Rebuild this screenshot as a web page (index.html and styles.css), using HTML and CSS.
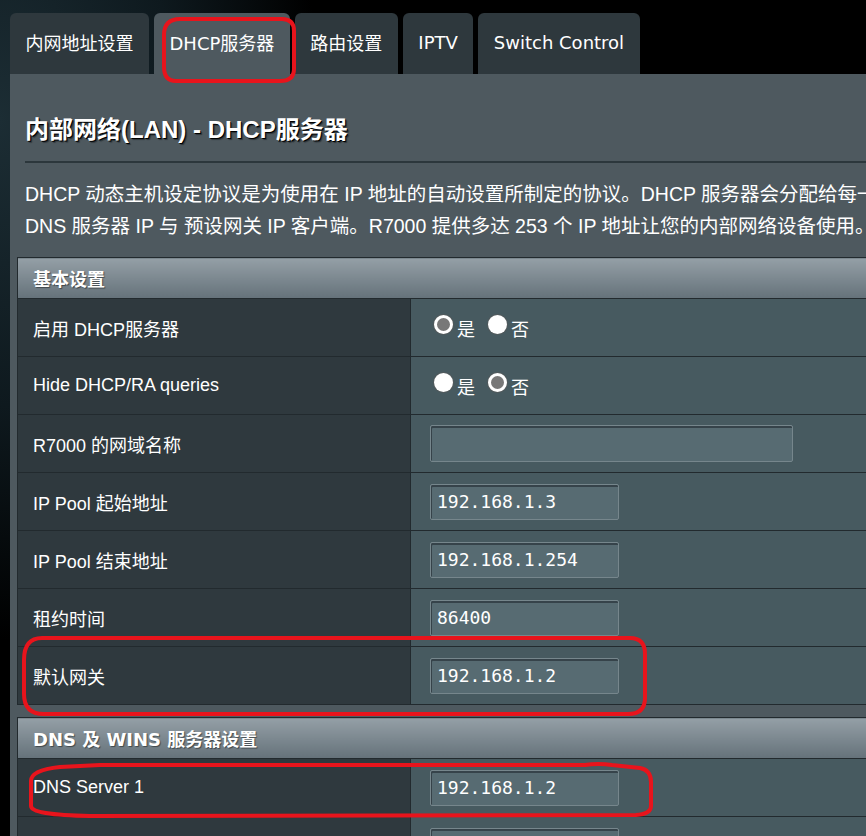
FILE: index.html
```html
<!DOCTYPE html>
<html lang="zh-CN">
<head>
<meta charset="utf-8">
<title>内部网络(LAN) - DHCP服务器</title>
<link rel="stylesheet" href="styles.css">
</head>
<body>
<div class="page">
  <nav class="tabs">
    <div class="tab">内网地址设置</div>
    <div class="tab active">DHCP服务器</div>
    <div class="tab">路由设置</div>
    <div class="tab">IPTV</div>
    <div class="tab">Switch Control</div>
  </nav>
  <main class="panel">
    <h1 class="title">内部网络(LAN) - DHCP服务器</h1>
    <div class="divider"></div>
    <p class="desc"><span>DHCP 动态主机设定协议是为使用在 IP 地址的自动设置所制定的协议。DHCP 服务器会分配给每一</span><br><span>DNS 服务器 IP 与 预设网关 IP 客户端。R7000 提供多达 253 个 IP 地址让您的内部网络设备使用。</span></p>

    <table class="form-table">
      <colgroup><col class="col-label"><col></colgroup>
      <thead><tr><th colspan="2">基本设置</th></tr></thead>
      <tbody>
        <tr>
          <td class="label">启用 DHCP服务器</td>
          <td class="value">
            <div class="radio-group">
              <input class="radio" type="radio" name="dhcp" checked><span class="radio-text">是</span>
              <input class="radio" type="radio" name="dhcp"><span class="radio-text">否</span>
            </div>
          </td>
        </tr>
        <tr>
          <td class="label">Hide DHCP/RA queries</td>
          <td class="value">
            <div class="radio-group">
              <input class="radio" type="radio" name="hide"><span class="radio-text">是</span>
              <input class="radio" type="radio" name="hide" checked><span class="radio-text">否</span>
            </div>
          </td>
        </tr>
        <tr>
          <td class="label">R7000 的网域名称</td>
          <td class="value"><input class="text-input wide" type="text" value=""></td>
        </tr>
        <tr>
          <td class="label">IP Pool 起始地址</td>
          <td class="value"><input class="text-input" type="text" value="192.168.1.3"></td>
        </tr>
        <tr>
          <td class="label">IP Pool 结束地址</td>
          <td class="value"><input class="text-input" type="text" value="192.168.1.254"></td>
        </tr>
        <tr>
          <td class="label">租约时间</td>
          <td class="value"><input class="text-input" type="text" value="86400"></td>
        </tr>
        <tr>
          <td class="label">默认网关</td>
          <td class="value"><input class="text-input" type="text" value="192.168.1.2"></td>
        </tr>
      </tbody>
    </table>

    <table class="form-table second">
      <colgroup><col class="col-label"><col></colgroup>
      <thead><tr><th colspan="2">DNS 及 WINS 服务器设置</th></tr></thead>
      <tbody>
        <tr>
          <td class="label">DNS Server 1</td>
          <td class="value"><input class="text-input" type="text" value="192.168.1.2"></td>
        </tr>
        <tr>
          <td class="label"></td>
          <td class="value"><input class="text-input" type="text" value=""></td>
        </tr>
      </tbody>
    </table>
  </main>

  <svg class="annotations" width="866" height="836" viewBox="0 0 866 836" aria-hidden="true">
    <path d="M180 19 L282 19 Q294 19 294 31 L294 69 Q294 81 280 81 L176 81 Q164 81 164 67 L164 35 Q164 19 180 19 Z"/>
    <path d="M42 638 L630 638 Q645 638 645 654 L645 698 Q645 714 628 714 L44 714 Q24 714 24 694 L24 660 Q24 638 42 638 Z"/>
    <path d="M100 765 L585 765 Q598 763 612 765 L640 768 Q651 770 651 782 L651 806 Q651 814 636 815 L90 816 Q31 815 31 806 L31 781 Q31 770 60 767 Z"/>
  </svg>
</div>
</body>
</html>
```
FILE: styles.css
```css
html, body {
  margin: 0;
  height: 100%;
  overflow: hidden;
}

body {
  background:
    radial-gradient(ellipse 320px 520px at 0 120px, #1c2d34 0%, #0e191e 55%, #000 100%),
    #000;
  color: #fff;
  font-family: "Liberation Sans", "Noto Sans CJK SC", sans-serif;
}

.page {
  position: relative;
  width: 1000px;
  min-height: 836px;
}

/* Tabs */
.tabs {
  display: flex;
  gap: 5px;
  padding: 13px 0 0 10px;
}

.tab {
  box-sizing: border-box;
  height: 61px;
  padding: 0 15.5px 3px;
  display: flex;
  align-items: center;
  background: #2e383d;
  border-radius: 6px 6px 0 0;
  font-family: "DejaVu Sans", "Noto Sans CJK SC", sans-serif;
  font-size: 18px;
  color: #fff;
  white-space: nowrap;
}

.tab.active {
  background: #4e595f;
}

/* Main panel */
.panel {
  margin-left: 10px;
  background: #4e595f;
  padding: 41px 0 40px 7px;
  min-height: 800px;
}

.title {
  margin: 0 0 0 8px;
  font-size: 24px;
  line-height: 30px;
  font-weight: bold;
  text-shadow: 1px 1px 0 #000, 2px 2px 1px rgba(0, 0, 0, 0.4);
}

.divider {
  margin: 16px 0 0 8px;
  height: 2px;
  background: #2c373c;
}

.desc {
  margin: 15px 0 0 8px;
  font-size: 19.5px;
  line-height: 32px;
  white-space: nowrap;
}

/* Tables */
.form-table {
  margin-top: 15px;
  width: 990px;
  border-collapse: collapse;
  table-layout: fixed;
}

.form-table.second {
  margin-top: 12px;
}

.col-label {
  width: 393px;
}

.form-table th {
  height: 40px;
  padding: 0 15px;
  text-align: left;
  font-family: "DejaVu Sans", "Noto Sans CJK SC", sans-serif;
  font-size: 18px;
  font-weight: bold;
  background: linear-gradient(#949fa6, #65727a);
  border: 1px solid #222a2e;
  text-shadow: 1px 1px 1px rgba(0, 0, 0, 0.45);
}

.form-table td {
  height: 58px;
  border: 1px solid #222a2e;
  box-sizing: border-box;
}

.label {
  padding: 0 15px;
  background: #2f393e;
  font-size: 18px;
}

.value {
  padding: 0 0 0 19px;
  background: #475a60;
}

/* Radios */
.radio-group {
  display: flex;
  align-items: center;
  font-size: 18px;
}

.radio {
  appearance: none;
  -webkit-appearance: none;
  box-sizing: border-box;
  width: 19px;
  height: 19px;
  margin: 0 4px 6px 4px;
  border-radius: 50%;
  background: #fff;
  box-shadow: 0 0 0 1px rgba(90, 90, 90, 0.6);
}

.radio:checked {
  background: #787878;
  border: 3px solid #fff;
}

.radio-text {
  margin-right: 9px;
}

/* Text inputs */
.text-input {
  box-sizing: border-box;
  width: 189px;
  height: 36px;
  padding: 0 6px;
  margin: 0;
  vertical-align: middle;
  background: #576b72;
  border: 1px solid #76868c;
  border-radius: 2px;
  box-shadow: inset 1px 2px 0 #36434a;
  color: #fff;
  font-family: "DejaVu Sans Mono", monospace;
  font-size: 18px;
  outline: none;
}

.text-input.wide {
  width: 363px;
  height: 37px;
}

/* Hand-drawn annotation layer */
.annotations {
  position: absolute;
  left: 0;
  top: 0;
  pointer-events: none;
}

.annotations path {
  fill: none;
  stroke: #e8141c;
  stroke-width: 4;
  stroke-linejoin: round;
}
```
